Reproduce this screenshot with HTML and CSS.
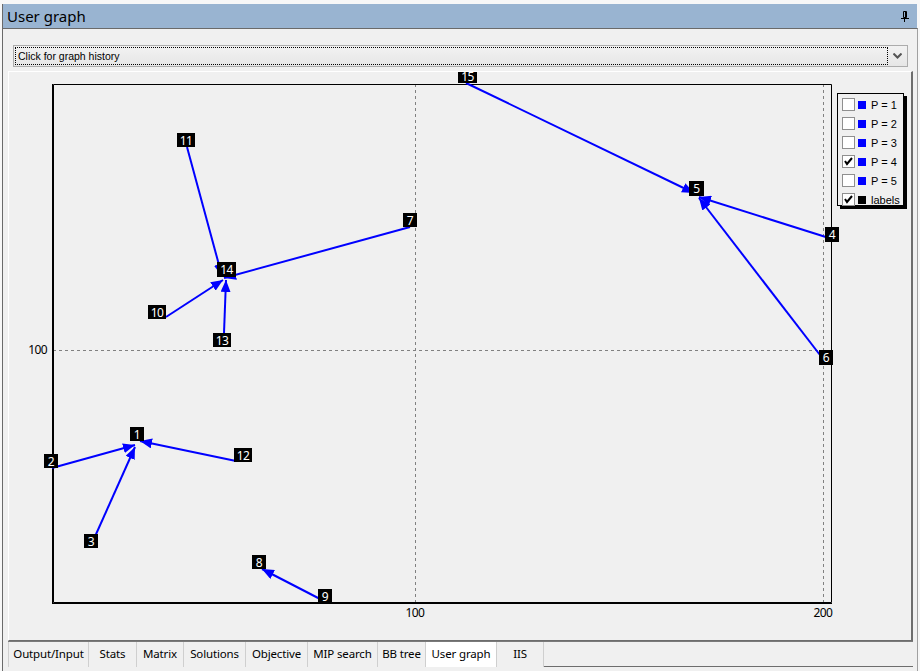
FILE: index.html
```html
<!DOCTYPE html>
<html>
<head>
<meta charset="utf-8">
<title>User graph</title>
<link rel="stylesheet" href="styles.css">
</head>
<body>
<div class="window">
  <div class="titlebar">
    <span class="title">User graph</span>
    <svg class="pin" width="8" height="11" viewBox="0 0 8 11">
      <path d="M2.5 0.5h3v6h-3z" fill="none" stroke="#000" stroke-width="1"/>
      <path d="M4.5 1v5" stroke="#000" stroke-width="1"/>
      <path d="M0 7.5h8" stroke="#000" stroke-width="1"/>
      <path d="M3.5 8v3" stroke="#000" stroke-width="1"/>
    </svg>
  </div>
  <div class="panel">
    <div class="combo">
      <div class="combo-field"><span class="combo-text">Click for graph history</span></div>
      <div class="combo-btn">
        <svg width="9" height="6" viewBox="0 0 9 6"><path d="M0.5 0.5 L4.5 4.5 L8.5 0.5" fill="none" stroke="#555" stroke-width="2"/></svg>
      </div>
    </div>
    <div class="chart">
      <svg class="plot" width="901" height="568" viewBox="9 72 901 568">
        <defs>
          <marker id="arr" markerUnits="userSpaceOnUse" markerWidth="12" markerHeight="10" refX="12" refY="5" orient="auto">
            <path d="M0 0 L12 5 L0 10 z" fill="#0000ff"/>
          </marker>
        </defs>
        <g stroke="#808080" stroke-width="1" stroke-dasharray="3 3">
          <line x1="53" y1="350.5" x2="832" y2="350.5"/>
          <line x1="415.5" y1="84" x2="415.5" y2="603"/>
          <line x1="823.5" y1="84" x2="823.5" y2="603"/>
        </g>
        <g stroke="#000" stroke-width="1" fill="none">
          <path d="M53.5 84.5 V602.5 H831.5 V84.5 Z"/>
        </g>
        <g stroke="#000" stroke-width="1">
          <line x1="53" y1="603.5" x2="832" y2="603.5"/>
          <line x1="52.5" y1="84" x2="52.5" y2="604"/>
        </g>
        <g class="axis">
          <text x="47" y="354" text-anchor="end">100</text>
          <text x="415" y="617" text-anchor="middle">100</text>
          <text x="823" y="617" text-anchor="middle">200</text>
        </g>
        <g stroke="#0000ff" stroke-width="2" fill="none" marker-end="url(#arr)">
          <line x1="466" y1="83" x2="694" y2="193"/>
          <line x1="829" y1="238" x2="699" y2="197"/>
          <line x1="820" y1="355" x2="699" y2="198"/>
          <line x1="410" y1="227" x2="224" y2="278"/>
          <line x1="187" y1="147" x2="222" y2="276"/>
          <line x1="166" y1="317" x2="223" y2="280"/>
          <line x1="224" y1="333" x2="226" y2="280"/>
          <line x1="52" y1="468" x2="135" y2="445"/>
          <line x1="236" y1="461" x2="140" y2="441"/>
          <line x1="93" y1="541" x2="135" y2="447"/>
          <line x1="322" y1="600" x2="262" y2="569"/>
        </g>
        <g class="nodes">
          <rect x="458" y="70" width="19" height="13"/><text x="467.5" y="81">15</text>
          <rect x="689" y="181" width="15" height="15"/><text x="696.5" y="193">5</text>
          <rect x="825" y="227" width="14" height="15"/><text x="832" y="239">4</text>
          <rect x="819" y="350" width="14" height="15"/><text x="826" y="362">6</text>
          <rect x="403" y="213" width="14" height="14"/><text x="410" y="225">7</text>
          <rect x="177" y="133" width="18" height="14"/><text x="186" y="145">11</text>
          <rect x="217" y="262" width="19" height="15"/><text x="226.5" y="274">14</text>
          <rect x="148" y="305" width="18" height="14"/><text x="157" y="317">10</text>
          <rect x="213" y="333" width="18" height="14"/><text x="222" y="345">13</text>
          <rect x="130" y="427" width="14" height="14"/><text x="137" y="439">1</text>
          <rect x="44" y="454" width="14" height="14"/><text x="51" y="466">2</text>
          <rect x="234" y="448" width="18" height="14"/><text x="243" y="460">12</text>
          <rect x="84" y="534" width="14" height="14"/><text x="91" y="546">3</text>
          <rect x="252" y="555" width="14" height="14"/><text x="259" y="567">8</text>
          <rect x="318" y="589" width="14" height="14"/><text x="325" y="601">9</text>
        </g>
      </svg>
      <div class="legend">
        <div class="lg-row"><span class="cb"></span><span class="sw"></span><span class="lt">P = 1</span></div>
        <div class="lg-row"><span class="cb"></span><span class="sw"></span><span class="lt">P = 2</span></div>
        <div class="lg-row"><span class="cb"></span><span class="sw"></span><span class="lt">P = 3</span></div>
        <div class="lg-row"><span class="cb"><svg width="11" height="11" viewBox="0 0 11 11"><path d="M2 5 L4 8 L9 2" fill="none" stroke="#000" stroke-width="2"/></svg></span><span class="sw"></span><span class="lt">P = 4</span></div>
        <div class="lg-row"><span class="cb"></span><span class="sw"></span><span class="lt">P = 5</span></div>
        <div class="lg-row"><span class="cb"><svg width="11" height="11" viewBox="0 0 11 11"><path d="M2 5 L4 8 L9 2" fill="none" stroke="#000" stroke-width="2"/></svg></span><span class="sw sw-black"></span><span class="lt">labels</span></div>
      </div>
    </div>
    <div class="tabs">
      <div class="tab t1">Output/Input</div>
      <div class="tab t2">Stats</div>
      <div class="tab t3">Matrix</div>
      <div class="tab t4">Solutions</div>
      <div class="tab t5">Objective</div>
      <div class="tab t6">MIP search</div>
      <div class="tab t7">BB tree</div>
      <div class="tab t8 active">User graph</div>
      <div class="tab t9">IIS</div>
      <div class="tab-rest"></div>
    </div>
  </div>
</div>
</body>
</html>
```

FILE: styles.css
```css
* { box-sizing: border-box; }
html, body { margin: 0; padding: 0; }
body {
  width: 920px;
  height: 671px;
  overflow: hidden;
  background: #f0f0f0;
  font-family: "Noto Sans", "Open Sans", sans-serif;
  color: #000;
}
.window {
  height: 671px;
  display: flex;
  flex-direction: column;
  padding-top: 4px;
  background: #f7f7f7;
}
.titlebar {
  height: 24px;
  margin: 0 3px 0 2px;
  background: #99b4d1;
  display: flex;
  align-items: center;
  justify-content: space-between;
  padding: 0 8px 0 4px;
  border-left: 1px solid #6a6a6a;
}
.title {
  font-size: 15px;
  line-height: 24px;
}
.pin { display: block; }
.panel {
  flex: 1;
  margin: 0 2px 0 2px;
  border-top: 1px solid #6a6a6a;
  border-left: 1px solid #6a6a6a;
  border-right: 1px solid #a0a0a0;
  background: #f0f0f0;
  display: flex;
  flex-direction: column;
  padding: 16px 4px 0 5px;
}
.combo {
  height: 22px;
  margin: 0 5px 0 5px;
  border: 1px solid #acacac;
  background: linear-gradient(#f2f2f2, #e6e6e6);
  display: flex;
  align-items: stretch;
  padding: 1px;
}
.combo-field {
  flex: 1;
  border: 1px dotted #000;
  display: flex;
  align-items: center;
  padding-left: 2px;
}
.combo-text {
  font-family: "Liberation Sans", sans-serif;
  font-size: 10.5px;
}
.combo-btn {
  width: 18px;
  display: flex;
  align-items: center;
  justify-content: center;
}
.combo-btn svg { display: block; }
.chart {
  position: relative;
  margin-top: 4px;
  height: 570px;
  border-top: 1px solid #ffffff;
  border-left: 1px solid #ffffff;
  border-right: 2px solid #6d6d6d;
  border-bottom: 1px solid #6d6d6d;
  background: #f0f0f0;
}
.plot { display: block; }
.axis text {
  font-family: "Noto Sans", sans-serif;
  font-size: 12px;
  letter-spacing: -0.6px;
  fill: #000;
}
.nodes rect { fill: #000; }
.nodes text {
  font-family: "Noto Sans", sans-serif;
  font-size: 12px;
  letter-spacing: -0.5px;
  fill: #fff;
  text-anchor: middle;
}
.legend {
  position: absolute;
  left: 828px;
  top: 21px;
  width: 67px;
  height: 113px;
  border: 1px solid #000;
  box-shadow: 3px 3px 0 #000;
  background: #f0f0f0;
  padding: 1px 0 0 4px;
}
.lg-row {
  height: 19px;
  display: flex;
  align-items: center;
}
.cb {
  width: 13px;
  height: 13px;
  border: 1px solid #8f8f8f;
  background: #ffffff;
  display: flex;
  align-items: center;
  justify-content: center;
}
.cb svg { display: block; }
.sw {
  width: 8px;
  height: 8px;
  background: #0000ff;
  margin-left: 3px;
}
.sw-black { background: #000; }
.lt {
  font-family: "Liberation Sans", sans-serif;
  font-size: 11px;
  margin-left: 5px;
  color: #000;
}
.tabs {
  height: 26px;
  display: flex;
  border-top: 1px solid #7a7a7a;
  border-bottom: 1px solid #6d6d6d;
}
.tab {
  height: 25px;
  font-size: 11.5px;
  letter-spacing: -0.15px;
  line-height: 24px;
  text-align: center;
  border-right: 1px solid #cfcfcf;
  background: #f0f0f0;
  white-space: nowrap;
}
.t1 { width: 81px; border-left: 1px solid #cfcfcf; }
.t2 { width: 48px; }
.t3 { width: 47px; }
.t4 { width: 62px; }
.t5 { width: 62px; }
.t6 { width: 70px; }
.t7 { width: 48px; }
.t8 { width: 71px; }
.t9 { width: 47px; }
.tab.active { background: #ffffff; }
.tab-rest { flex: 1; }
```
